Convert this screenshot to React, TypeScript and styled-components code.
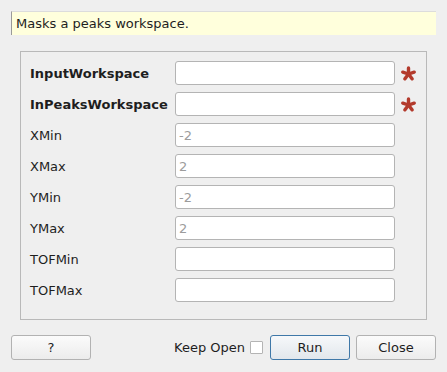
import React from 'react';
import styled, { createGlobalStyle } from 'styled-components';

const GlobalStyle = createGlobalStyle`
  html, body {
    margin: 0;
    padding: 0;
    background: #efefef;
    font-family: 'DejaVu Sans', 'Liberation Sans', sans-serif;
    font-size: 13px;
    color: #1e1e1e;
  }
`;

const Dialog = styled.div`
  width: 447px;
  height: 372px;
  box-sizing: border-box;
  padding: 11px 11px 0 11px;
  display: flex;
  flex-direction: column;
`;

const Description = styled.div`
  height: 24px;
  box-sizing: border-box;
  background: #ffffdc;
  border-left: 1px solid #9a9a9a;
  border-top: 1px solid #dcdcdc;
  padding-left: 4px;
  display: flex;
  align-items: center;
`;

const GroupBox = styled.div`
  margin: 16px 9px 0 9px;
  border: 1px solid #b9b9b9;
  padding: 9px 0 17px 9px;
  display: grid;
  grid-template-columns: 145px 220px 21px;
  grid-auto-rows: 24px;
  row-gap: 7px;
  align-items: center;
`;

const Label = styled.div<{ $bold?: boolean }>`
  font-weight: ${(p) => (p.$bold ? 'bold' : 'normal')};
  white-space: nowrap;
`;

const Field = styled.input`
  height: 24px;
  width: 220px;
  box-sizing: border-box;
  border: 1px solid #b4b4b4;
  border-radius: 3px;
  background: #fff;
  padding: 0 3px;
  font: inherit;
  color: #1e1e1e;
  outline: none;
  &::placeholder {
    color: #9c9c9c;
  }
`;

const Star = styled.svg`
  margin-left: 6px;
  width: 15px;
  height: 15px;
`;

const Footer = styled.div`
  margin-top: 15px;
  display: flex;
  align-items: center;
`;

const Button = styled.button<{ $primary?: boolean }>`
  width: 80px;
  height: 25px;
  box-sizing: border-box;
  border-radius: 3px;
  font: inherit;
  color: #1e1e1e;
  border: 1px solid ${(p) => (p.$primary ? '#3f78a8' : '#b2b2b2')};
  background: ${(p) =>
    p.$primary
      ? 'linear-gradient(#f6f8fa, #e2e7ec)'
      : 'linear-gradient(#fbfbfb, #ececec)'};
  padding: 0;
`;

const Spacer = styled.div`
  flex: 1;
`;

const KeepOpen = styled.label`
  display: flex;
  align-items: center;
  gap: 5px;
  margin-right: 7px;
`;

const Check = styled.span`
  width: 13px;
  height: 13px;
  box-sizing: border-box;
  border: 1px solid #b4b4b4;
  background: #fff;
  border-radius: 1px;
`;

const Gap = styled.div`
  width: 6px;
`;

const Asterisk = () => (
  <Star viewBox="0 0 15 15">
    {[0, 72, 144, 216, 288].map((a) => {
      const r = ((a - 90) * Math.PI) / 180;
      return (
        <line
          key={a}
          x1="7.5"
          y1="8"
          x2={7.5 + 6 * Math.cos(r)}
          y2={8 + 6 * Math.sin(r)}
          stroke="#b33a2c"
          strokeWidth="3.4"
          strokeLinecap="round"
        />
      );
    })}
  </Star>
);

const rows: { name: string; bold?: boolean; hint?: string }[] = [
  { name: 'InputWorkspace', bold: true },
  { name: 'InPeaksWorkspace', bold: true },
  { name: 'XMin', hint: '-2' },
  { name: 'XMax', hint: '2' },
  { name: 'YMin', hint: '-2' },
  { name: 'YMax', hint: '2' },
  { name: 'TOFMin' },
  { name: 'TOFMax' },
];

export default function App() {
  return (
    <Dialog>
      <GlobalStyle />
      <Description>Masks a peaks workspace.</Description>
      <GroupBox>
        {rows.map((r) => (
          <React.Fragment key={r.name}>
            <Label $bold={r.bold}>{r.name}</Label>
            <Field placeholder={r.hint} />
            {r.bold ? <Asterisk /> : <span />}
          </React.Fragment>
        ))}
      </GroupBox>
      <Footer>
        <Button>?</Button>
        <Spacer />
        <KeepOpen>
          Keep Open <Check />
        </KeepOpen>
        <Button $primary>Run</Button>
        <Gap />
        <Button>Close</Button>
      </Footer>
    </Dialog>
  );
}
